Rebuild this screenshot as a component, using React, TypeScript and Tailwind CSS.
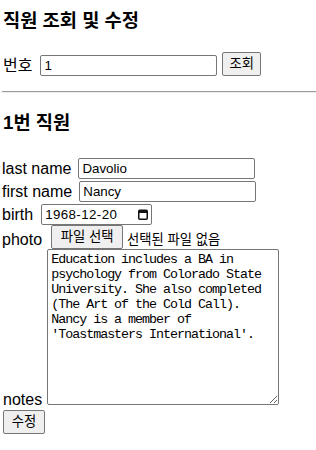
import React from "react";

const NOTES =
  "Education includes a BA in psychology from Colorado State University. She also completed (The Art of the Cold Call). Nancy is a member of 'Toastmasters International'.";

const sans = "font-['Liberation_Sans','Noto_Sans_CJK_KR',sans-serif]";
const field =
  "h-[21px] rounded-[2px] border border-[#767676] bg-white px-[3px] text-[13.33px] leading-[15px] text-black outline-none";
const btn =
  "h-[24px] rounded-[2px] border border-[#767676] bg-[#efefef] px-[6px] text-[13.33px] leading-[18px] text-black";

function Row({ label, children }: { label: string; children: React.ReactNode }) {
  return (
    <div className="flex h-[23px] items-center">
      <span className="mr-[7px] text-[16px] leading-[18px]">{label}</span>
      {children}
    </div>
  );
}

function CalendarIcon() {
  return (
    <svg width="10" height="11" viewBox="0 0 10 11" className="shrink-0">
      <rect x="0.75" y="1.25" width="8.5" height="9" rx="1" fill="none" stroke="#111" strokeWidth="1.5" />
      <rect x="1" y="1.5" width="8" height="2.5" fill="#111" />
    </svg>
  );
}

export default function App() {
  return (
    <div className={`${sans} bg-white pl-[2px] text-black`}>
      <h3 className="ml-[1px] pt-[9px] text-[18.72px] font-bold leading-[24px]">직원 조회 및 수정</h3>

      <div className="mt-[19px] flex h-[24px] items-end">
        <span className="ml-[1px] mr-[8px] text-[16px] leading-[21px]">번호</span>
        <input className={`${field} w-[177px]`} defaultValue="1" />
        <button className={`${btn} ml-[5px]`}>조회</button>
      </div>

      <hr className="mt-[15px] h-[2px] border-0 border-t border-b border-t-[#9a9a9a] border-b-[#eeeeee]" />

      <h3 className="ml-[1px] mt-[18px] text-[18.72px] font-bold leading-[24px]">1번 직원</h3>

      <div className="mt-[22px] flex flex-col">
        <Row label="last name">
          <input className={`${field} w-[177px]`} defaultValue="Davolio" />
        </Row>
        <Row label="first name">
          <input className={`${field} w-[177px]`} defaultValue="Nancy" />
        </Row>
        <Row label="birth">
          <div className={`${field} ml-[1px] flex w-[111px] shrink-0 items-center pr-[3px]`}>
            <span className="tracking-[0.4px]">1968-12-20</span>
            <span className="flex-1" />
            <CalendarIcon />
          </div>
        </Row>
        <div className="flex h-[23px] items-end">
          <span className="mr-[8px] text-[16px] leading-[18px]">photo</span>
          <button className={`${btn} ml-[1px] w-[72px] px-0`}>파일 선택</button>
          <span className="ml-[4px] text-[13.33px] leading-[18px]">선택된 파일 없음</span>
        </div>
        <div className="flex items-end">
          <span className="ml-[1px] mr-[5px] -mb-[4px] text-[16px] leading-[18px]">notes</span>
          <textarea
            className="h-[156px] w-[232px] resize rounded-[2px] border border-[#767676] bg-white px-[3px] py-[2px] font-['Liberation_Mono',monospace] text-[13.33px] leading-[15px] tracking-[-1px] text-black outline-none"
            defaultValue={NOTES}
          />
        </div>
        <div className="mt-[4px]">
          <button className={`${btn} ml-[1px] w-[42px] px-0`}>수정</button>
        </div>
      </div>
    </div>
  );
}
